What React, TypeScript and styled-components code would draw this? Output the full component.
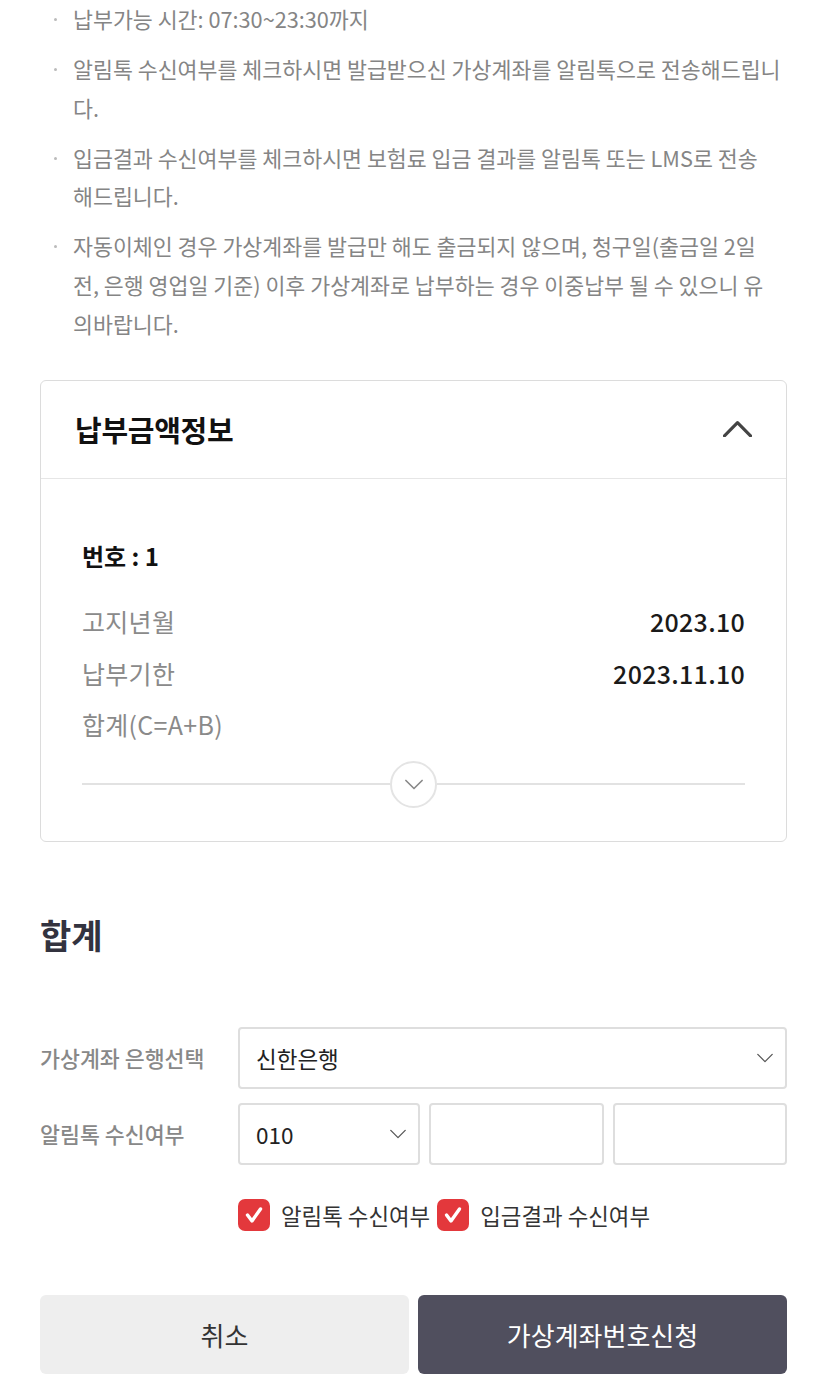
import styled, { createGlobalStyle } from 'styled-components'

const GlobalStyle = createGlobalStyle`
  html, body {
    margin: 0;
    padding: 0;
    background: #fff;
  }
  body {
    font-family: "Noto Sans CJK KR", "Noto Sans", sans-serif;
    color: #222;
  }
  * {
    box-sizing: border-box;
  }
`

const Page = styled.div`
  width: 827px;
  padding: 0 40px 9px;
`

const NoticeList = styled.ul`
  list-style: none;
  margin: 0;
  padding: 0;
`

const NoticeItem = styled.li`
  display: flex;
  font-size: 21.7px;
  line-height: 38.6px;
  color: #858585;

  & + & {
    margin-top: 11.5px;
  }
`

const NoticeText = styled.span`
  white-space: nowrap;
`

const Dot = styled.span`
  flex: 0 0 33px;
  display: flex;
  justify-content: flex-start;
  padding: 18px 0 0 14px;

  &::before {
    content: '';
    width: 3px;
    height: 3px;
    border-radius: 50%;
    background: #bbb;
  }
`

const Card = styled.section`
  margin-top: 37px;
  border: 1px solid #dcdcdc;
  border-radius: 6px;
`

const CardHeader = styled.div`
  height: 98px;
  display: flex;
  align-items: center;
  justify-content: space-between;
  padding: 0 34px 2px 34px;
  border-bottom: 1px solid #e6e6e6;
`

const CardTitle = styled.h2`
  margin: 0;
  font-size: 29px;
  font-weight: 700;
  color: #111;
  letter-spacing: -0.3px;
`

const CardBody = styled.div`
  padding: 61px 41px 33px;
`

const NumberLine = styled.div`
  font-size: 24px;
  line-height: 32px;
  font-weight: 700;
  color: #111;
  margin-bottom: 23px;
`

const InfoRow = styled.div`
  display: flex;
  justify-content: space-between;
  align-items: center;
  height: 51.5px;
  font-size: 25px;
`

const InfoLabel = styled.span`
  color: #8a8a8a;
  letter-spacing: 0.3px;
`

const InfoValue = styled.span`
  color: #1a1a1a;
  font-weight: 500;
  letter-spacing: 0.3px;
`

const ExpandRow = styled.div`
  display: flex;
  align-items: center;
  margin-top: 11px;
`

const ExpandLine = styled.div`
  flex: 1;
  height: 2px;
  background: #e2e2e2;
`

const ExpandButton = styled.button`
  width: 47px;
  height: 47px;
  border-radius: 50%;
  border: 2px solid #e4e4e4;
  background: #fff;
  display: flex;
  align-items: center;
  justify-content: center;
  padding: 0;
`

const SectionTitle = styled.h2`
  margin: 73px 0 72px;
  font-size: 34px;
  line-height: 40px;
  font-weight: 700;
  color: #33333f;
`

const FormRow = styled.div`
  display: flex;
  align-items: center;

  & + & {
    margin-top: 14px;
  }
`

const FormLabel = styled.div`
  flex: 0 0 198px;
  font-size: 21.7px;
  font-weight: 500;
  color: #888;
`

const FieldGroup = styled.div`
  flex: 1;
  min-width: 0;
  display: flex;
  gap: 9px;
`

const SelectBox = styled.div<{ $width?: number }>`
  ${({ $width }) => ($width ? `flex: 0 0 ${$width}px;` : 'flex: 1;')}
  height: 62px;
  border: 2px solid #dedede;
  border-radius: 4px;
  display: flex;
  align-items: center;
  justify-content: space-between;
  padding: 0 12px 0 16px;
  font-size: 22.5px;
  color: #222;
`

const TextInput = styled.input`
  flex: 1;
  width: 0;
  min-width: 0;
  height: 62px;
  border: 2px solid #dedede;
  border-radius: 4px;
  padding: 0 16px;
  font-size: 22px;
  font-family: inherit;
  outline: none;
`

const CheckRow = styled.div`
  display: flex;
  align-items: center;
  margin: 34px 0 0 198px;
`

const CheckLabel = styled.label`
  display: flex;
  align-items: center;
  gap: 11px;
  font-size: 22.4px;
  color: #333;
  margin-right: 7px;
`

const CheckBox = styled.span`
  width: 32px;
  height: 32px;
  border-radius: 7px;
  background: #e3383c;
  display: flex;
  align-items: center;
  justify-content: center;
`

const ButtonRow = styled.div`
  display: flex;
  gap: 9px;
  margin-top: 64px;
`

const ActionButton = styled.button<{ $primary?: boolean }>`
  flex: 1;
  height: 79px;
  border: none;
  border-radius: 6px;
  font-family: inherit;
  font-size: 26px;
  background: ${({ $primary }) => ($primary ? '#504f5e' : '#eeeeee')};
  color: ${({ $primary }) => ($primary ? '#fff' : '#333')};
`

const Chevron = ({ dir, size, color, width = 1.6 }: { dir: 'up' | 'down'; size: number; color: string; width?: number }) => (
  <svg width={size} height={size / 2 + 2} viewBox="0 0 20 11" fill="none">
    <path
      d={dir === 'up' ? 'M1 10 L10 1 L19 10' : 'M1 1 L10 10 L19 1'}
      stroke={color}
      strokeWidth={width}
      strokeLinecap="round"
      strokeLinejoin="round"
    />
  </svg>
)

const CheckMark = () => (
  <svg width="20" height="18" viewBox="0 0 20 18" fill="none">
    <path d="M3.5 9 L8 15 L16.5 3" stroke="#fff" strokeWidth="3.4" strokeLinecap="round" strokeLinejoin="round" />
  </svg>
)

// lines kept as in the source layout
const notices = [
  ['납부가능 시간: 07:30~23:30까지'],
  ['알림톡 수신여부를 체크하시면 발급받으신 가상계좌를 알림톡으로 전송해드립니', '다.'],
  ['입금결과 수신여부를 체크하시면 보험료 입금 결과를 알림톡 또는 LMS로 전송', '해드립니다.'],
  [
    '자동이체인 경우 가상계좌를 발급만 해도 출금되지 않으며, 청구일(출금일 2일',
    '전, 은행 영업일 기준) 이후 가상계좌로 납부하는 경우 이중납부 될 수 있으니 유',
    '의바랍니다.',
  ],
]

const infoRows = [
  { label: '고지년월', value: '2023.10' },
  { label: '납부기한', value: '2023.11.10' },
  { label: '합계(C=A+B)', value: '' },
]

export default function App() {
  return (
    <>
      <GlobalStyle />
      <Page>
        <NoticeList>
          {notices.map(lines => (
            <NoticeItem key={lines[0]}>
              <Dot />
              <NoticeText>
                {lines.map((line, i) => (
                  <span key={i}>
                    {i > 0 && <br />}
                    {line}
                  </span>
                ))}
              </NoticeText>
            </NoticeItem>
          ))}
        </NoticeList>

        <Card>
          <CardHeader>
            <CardTitle>납부금액정보</CardTitle>
            <Chevron dir="up" size={29} color="#444" width={2.2} />
          </CardHeader>
          <CardBody>
            <NumberLine>번호 : 1</NumberLine>
            {infoRows.map(row => (
              <InfoRow key={row.label}>
                <InfoLabel>{row.label}</InfoLabel>
                <InfoValue>{row.value}</InfoValue>
              </InfoRow>
            ))}
            <ExpandRow>
              <ExpandLine />
              <ExpandButton aria-label="펼치기">
                <Chevron dir="down" size={18} color="#888" width={1.8} />
              </ExpandButton>
              <ExpandLine />
            </ExpandRow>
          </CardBody>
        </Card>

        <SectionTitle>합계</SectionTitle>

        <FormRow>
          <FormLabel>가상계좌 은행선택</FormLabel>
          <FieldGroup>
            <SelectBox>
              <span>신한은행</span>
              <Chevron dir="down" size={16} color="#555" width={1.6} />
            </SelectBox>
          </FieldGroup>
        </FormRow>
        <FormRow>
          <FormLabel>알림톡 수신여부</FormLabel>
          <FieldGroup>
            <SelectBox $width={182}>
              <span>010</span>
              <Chevron dir="down" size={16} color="#555" width={1.6} />
            </SelectBox>
            <TextInput />
            <TextInput />
          </FieldGroup>
        </FormRow>

        <CheckRow>
          <CheckLabel>
            <CheckBox>
              <CheckMark />
            </CheckBox>
            알림톡 수신여부
          </CheckLabel>
          <CheckLabel>
            <CheckBox>
              <CheckMark />
            </CheckBox>
            입금결과 수신여부
          </CheckLabel>
        </CheckRow>

        <ButtonRow>
          <ActionButton>취소</ActionButton>
          <ActionButton $primary>가상계좌번호신청</ActionButton>
        </ButtonRow>
      </Page>
    </>
  )
}
